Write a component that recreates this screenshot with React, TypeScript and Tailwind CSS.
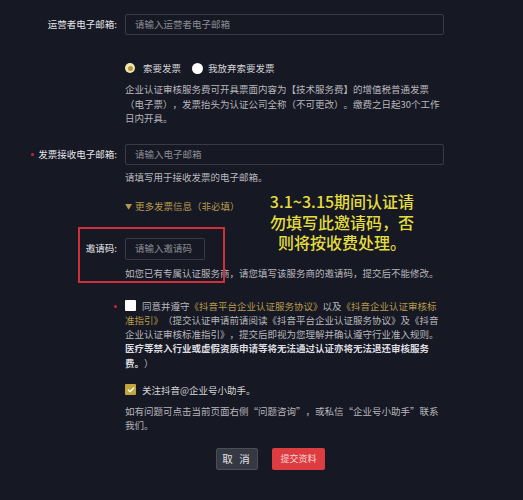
import { Check } from "lucide-react";

const Label = ({ text, required }: { text: string; required?: boolean }) => {
  return (
    <div className="w-[120px] shrink-0 flex items-center justify-end pr-[3px] text-[9.5px] text-[#e4e4e8]">
      {required && <span className="w-[3px] h-[3px] rounded-full bg-[#c4283c] mr-[4px]" />}
      <span>{text}:</span>
    </div>
  );
};

const Input = ({ placeholder, className }: { placeholder: string; className?: string }) => {
  return (
    <div
      className={
        "h-[21px] border border-[#383b47] rounded-[2px] bg-[#161823] flex items-center px-[9px] text-[9.5px] text-[#8b8c94] " +
        (className ?? "")
      }
    >
      {placeholder}
    </div>
  );
};

const App = () => {
  return (
    <div className="relative w-[523px] h-[500px] bg-[#161823] font-['Noto_Sans_CJK_SC',sans-serif] [text-spacing-trim:space-all] overflow-hidden">
      <div className="pt-[14px]">
        {/* operator email */}
        <div className="flex items-center gap-[2px]">
          <Label text="运营者电子邮箱" />
          <Input placeholder="请输入运营者电子邮箱" className="w-[319px] ml-[3px]" />
        </div>

        {/* invoice choice */}
        <div className="ml-[125px] mt-[26px] flex items-center h-[14px] text-[9.5px] text-[#d4d4d8]">
          <span className="w-[10px] h-[10px] rounded-full bg-[#efe6b4] flex items-center justify-center">
            <span className="w-[5px] h-[5px] rounded-full bg-[#b4993c]" />
          </span>
          <span className="ml-[8px]">索要发票</span>
          <span className="ml-[11px] w-[11px] h-[11px] rounded-full bg-white" />
          <span className="ml-[5px]">我放弃索要发票</span>
        </div>
        <p className="ml-[125px] mt-[7px] w-[320px] text-[9.5px] leading-[14.5px] text-[#b6b7bd]">
          企业认证审核服务费可开具票面内容为【技术服务费】的增值税普通发票（电子票），发票抬头为认证公司全称（不可更改）。缴费之日起30个工作日内开具。
        </p>

        {/* invoice email */}
        <div className="mt-[18px] flex items-center gap-[2px]">
          <Label text="发票接收电子邮箱" required />
          <Input placeholder="请输入电子邮箱" className="w-[319px] ml-[3px]" />
        </div>
        <p className="ml-[125px] mt-[5px] text-[9.5px] leading-[14px] text-[#b6b7bd]">请填写用于接收发票的电子邮箱。</p>
        <div className="ml-[125px] mt-[16px] flex items-center h-[14px] text-[9.5px] text-[#b59a4c]">
          <span className="text-[7px] mr-[3px]">▼</span>
          <span>更多发票信息（非必填）</span>
        </div>

        {/* invite code */}
        <div className="mt-[24px] flex items-center gap-[2px]">
          <Label text="邀请码" />
          <Input placeholder="请输入邀请码" className="w-[80px] ml-[3px] h-[22px]" />
        </div>
        <p className="ml-[125px] mt-[6px] text-[9.5px] leading-[14px] text-[#b6b7bd]">
          如您已有专属认证服务商，请您填写该服务商的邀请码，提交后不能修改。
        </p>

        {/* agreement */}
        <div className="relative ml-[125px] mt-[19px] w-[330px] text-[9.5px] leading-[14.3px] text-[#b6b7bd] whitespace-nowrap">
          <span className="absolute -left-[11px] top-[6px] w-[3px] h-[3px] rounded-full bg-[#c4283c]" />
          <div className="flex items-center">
            <span className="w-[11px] h-[11px] rounded-[1px] bg-white mr-[6px]" />
            <span>同意并遵守</span>
            <span className="text-[#b59a4c]">《抖音平台企业认证服务协议》</span>
            <span>以及</span>
            <span className="text-[#b59a4c]">《抖音企业认证审核标</span>
          </div>
          <div className="flex">
            <span className="text-[#b59a4c]">准指引》</span>
            <span>（提交认证申请前请阅读《抖音平台企业认证服务协议》及《抖音</span>
          </div>
          <div>企业认证审核标准指引》，提交后即视为您理解并确认遵守行业准入规则。</div>
          <div className="font-bold text-[#dcdce0]">医疗等禁入行业或虚假资质申请等将无法通过认证亦将无法退还审核服务</div>
          <div className="flex">
            <span className="font-bold text-[#dcdce0]">费。</span>
            <span>）</span>
          </div>
        </div>

        <div className="ml-[125px] mt-[13px] flex items-center h-[14px] text-[9.5px] text-[#d4d4d8]">
          <span className="w-[11px] h-[11px] rounded-[1px] bg-[#c2a63c] flex items-center justify-center">
            <Check className="w-[8px] h-[8px] text-white" strokeWidth={4} />
          </span>
          <span className="ml-[6px]">关注抖音@企业号小助手。</span>
        </div>
        <p className="ml-[125px] mt-[7px] w-[320px] text-[9.5px] leading-[14px] text-[#b6b7bd]">
          如有问题可点击当前页面右侧“问题咨询”，或私信“企业号小助手”联系我们。
        </p>

        {/* buttons */}
        <div className="mt-[16px] flex justify-center gap-[14px] pl-[18px]">
          <button className="w-[42px] h-[22px] rounded-[2px] bg-[#363843] border border-[#4b4d58] text-[10.5px] text-[#e2e2e6] tracking-[2px]">
            取 消
          </button>
          <button className="w-[53px] h-[22px] rounded-[2px] bg-[#dd3c40] text-[9px] text-[#f6d6d6]">提交资料</button>
        </div>
      </div>

      {/* annotation overlay */}
      <div className="absolute left-[78px] top-[227px] w-[147px] h-[56px] border-2 border-[#cf2f3b]" />
      <div className="absolute left-[262px] top-[191px] w-[160px] flex flex-col items-center text-[16px] leading-[20.5px] font-medium text-[#e4dd3e]">
        <div className="h-[20.5px]">3.1~3.15期间认证请</div>
        <div className="h-[20.5px]">勿填写此邀请码，否</div>
        <div className="h-[20.5px]">则将按收费处理。</div>
      </div>
    </div>
  );
};

export default App;
